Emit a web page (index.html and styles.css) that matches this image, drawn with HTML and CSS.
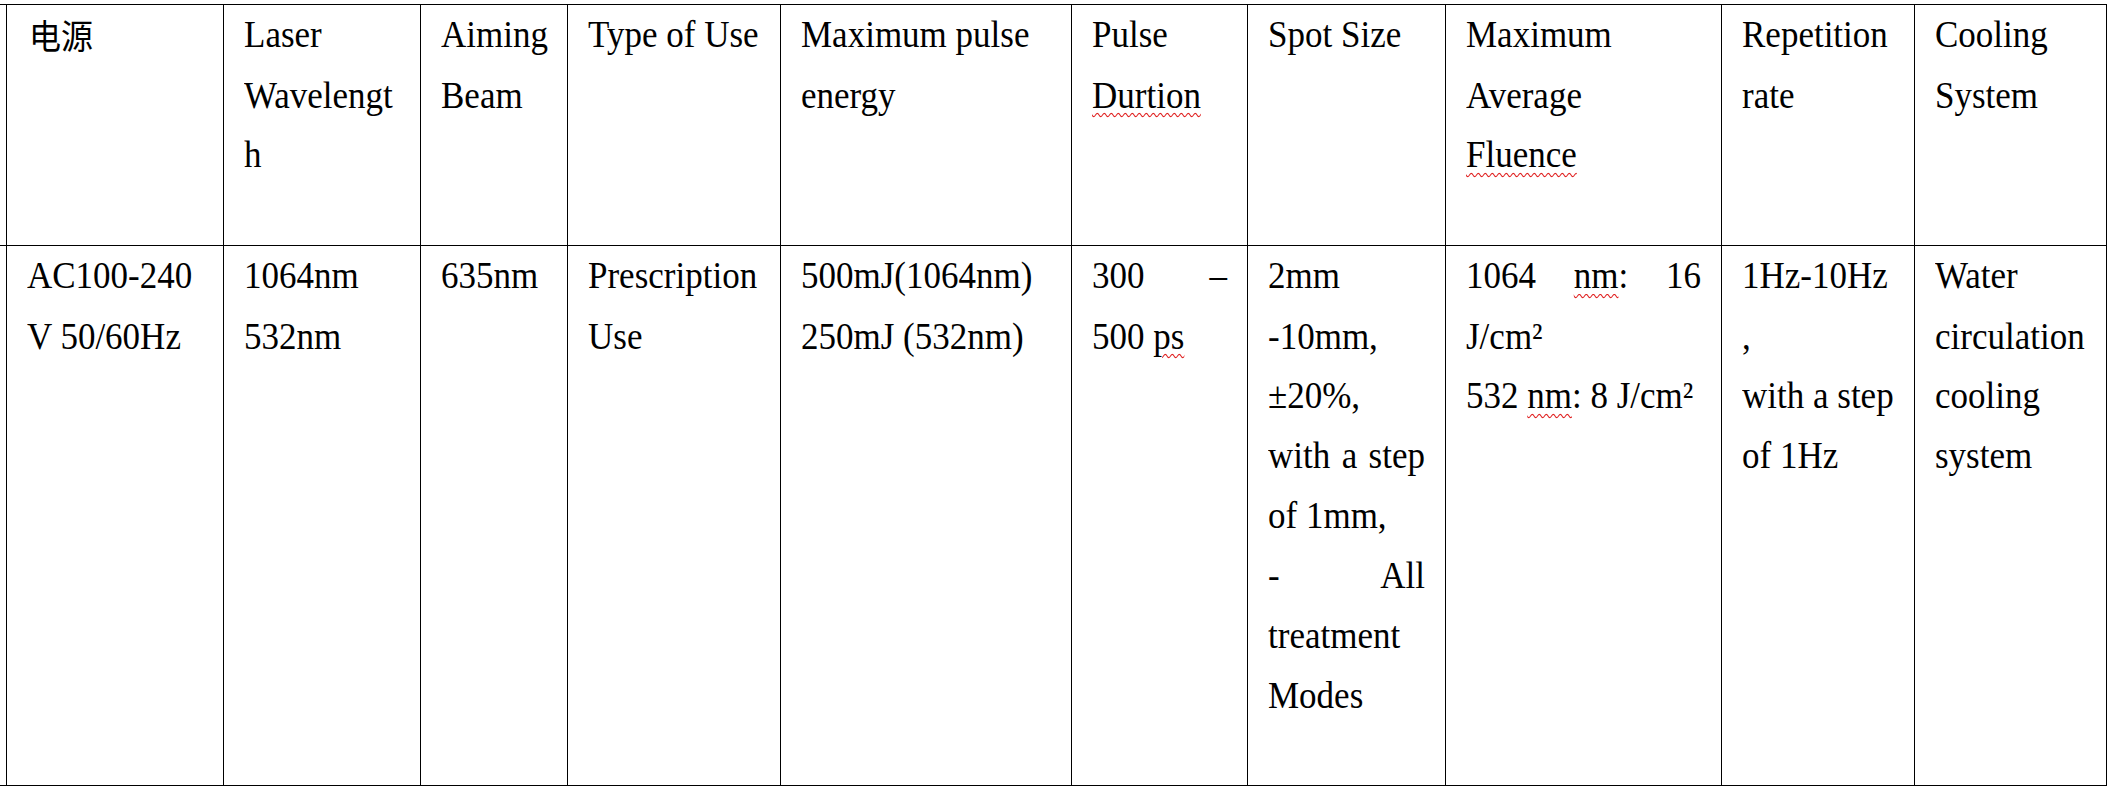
FILE: index.html
```html
<!DOCTYPE html>
<html lang="zh-CN">
<head>
<meta charset="utf-8">
<title>Specification table</title>
<link rel="stylesheet" href="styles.css">
</head>
<body>
<div class="spec">
  <div class="cell stub"></div>
  <div class="cell head"><div class="txt"><span class="zh">电源</span></div></div>
  <div class="cell head"><div class="txt">Laser<br>Wavelengt<br>h</div></div>
  <div class="cell head"><div class="txt">Aiming<br>Beam</div></div>
  <div class="cell head"><div class="txt">Type of Use</div></div>
  <div class="cell head"><div class="txt">Maximum pulse<br>energy</div></div>
  <div class="cell head"><div class="txt">Pulse<br><span class="sp">Durtion</span></div></div>
  <div class="cell head"><div class="txt">Spot Size</div></div>
  <div class="cell head"><div class="txt">Maximum<br>Average<br><span class="sp">Fluence</span></div></div>
  <div class="cell head"><div class="txt">Repetition<br>rate</div></div>
  <div class="cell head"><div class="txt">Cooling<br>System</div></div>

  <div class="cell stub"></div>
  <div class="cell data fixed"><div class="txt">AC100-240<br>V 50/60Hz</div></div>
  <div class="cell data fixed"><div class="txt">1064nm<br>532nm</div></div>
  <div class="cell data fixed"><div class="txt">635nm</div></div>
  <div class="cell data fixed"><div class="txt">Prescription<br>Use</div></div>
  <div class="cell data fixed"><div class="txt">500mJ(1064nm)<br>250mJ (532nm)</div></div>
  <div class="cell data"><div class="txt">300 – 500 <span class="sp">ps</span></div></div>
  <div class="cell data">
    <div class="txt">
      <p class="para">2mm -10mm, ±20%, with a step of 1mm,</p>
      <p class="para">- All treatment Modes</p>
    </div>
  </div>
  <div class="cell data">
    <div class="txt">
      <p class="para">1064 <span class="sp">nm</span>: 16 J/cm²</p>
      <p class="para">532 <span class="sp">nm</span>: 8 J/cm²</p>
    </div>
  </div>
  <div class="cell data fixed"><div class="txt">1Hz-10Hz<br>,<br>with a step<br>of 1Hz</div></div>
  <div class="cell data fixed"><div class="txt">Water<br>circulation<br>cooling<br>system</div></div>
</div>
</body>
</html>
```
FILE: styles.css
```css
html,
body {
  margin: 0;
  padding: 0;
  background: #ffffff;
}

body {
  font-family: "Liberation Serif", "Times New Roman", "Noto Sans CJK SC", serif;
  font-size: 35px;
  line-height: 60px;
  color: #000000;
}

.spec {
  display: grid;
  grid-template-columns: 7px 217px 197px 147px 213px 291px 176px 198px 276px 193px 192px;
  grid-template-rows: 241px 540px;
  width: 2107px;
  margin-top: 4px;
  border-top: 1px solid #000000;
}

.cell {
  box-sizing: border-box;
  border-right: 1px solid #000000;
  border-bottom: 1px solid #000000;
  padding: 0 20px;
}

.stub {
  padding: 0;
}

/* the source document is rendered slightly taller than wide */
.txt {
  line-height: 55.5px;
  transform: scaleY(1.08);
  transform-origin: 0 0;
}

.head {
  white-space: nowrap;
}

.data {
  text-align: justify;
}

.fixed {
  white-space: nowrap;
}

.para {
  margin: 0;
}

.zh {
  font-family: "Noto Sans CJK SC", "Noto Sans CJK TC", sans-serif;
  font-size: 32px;
  padding-left: 2px;
}

.sp {
  text-decoration-line: underline;
  text-decoration-style: wavy;
  text-decoration-color: #e02020;
  text-decoration-thickness: 1px;
  text-underline-offset: 5px;
}
```
